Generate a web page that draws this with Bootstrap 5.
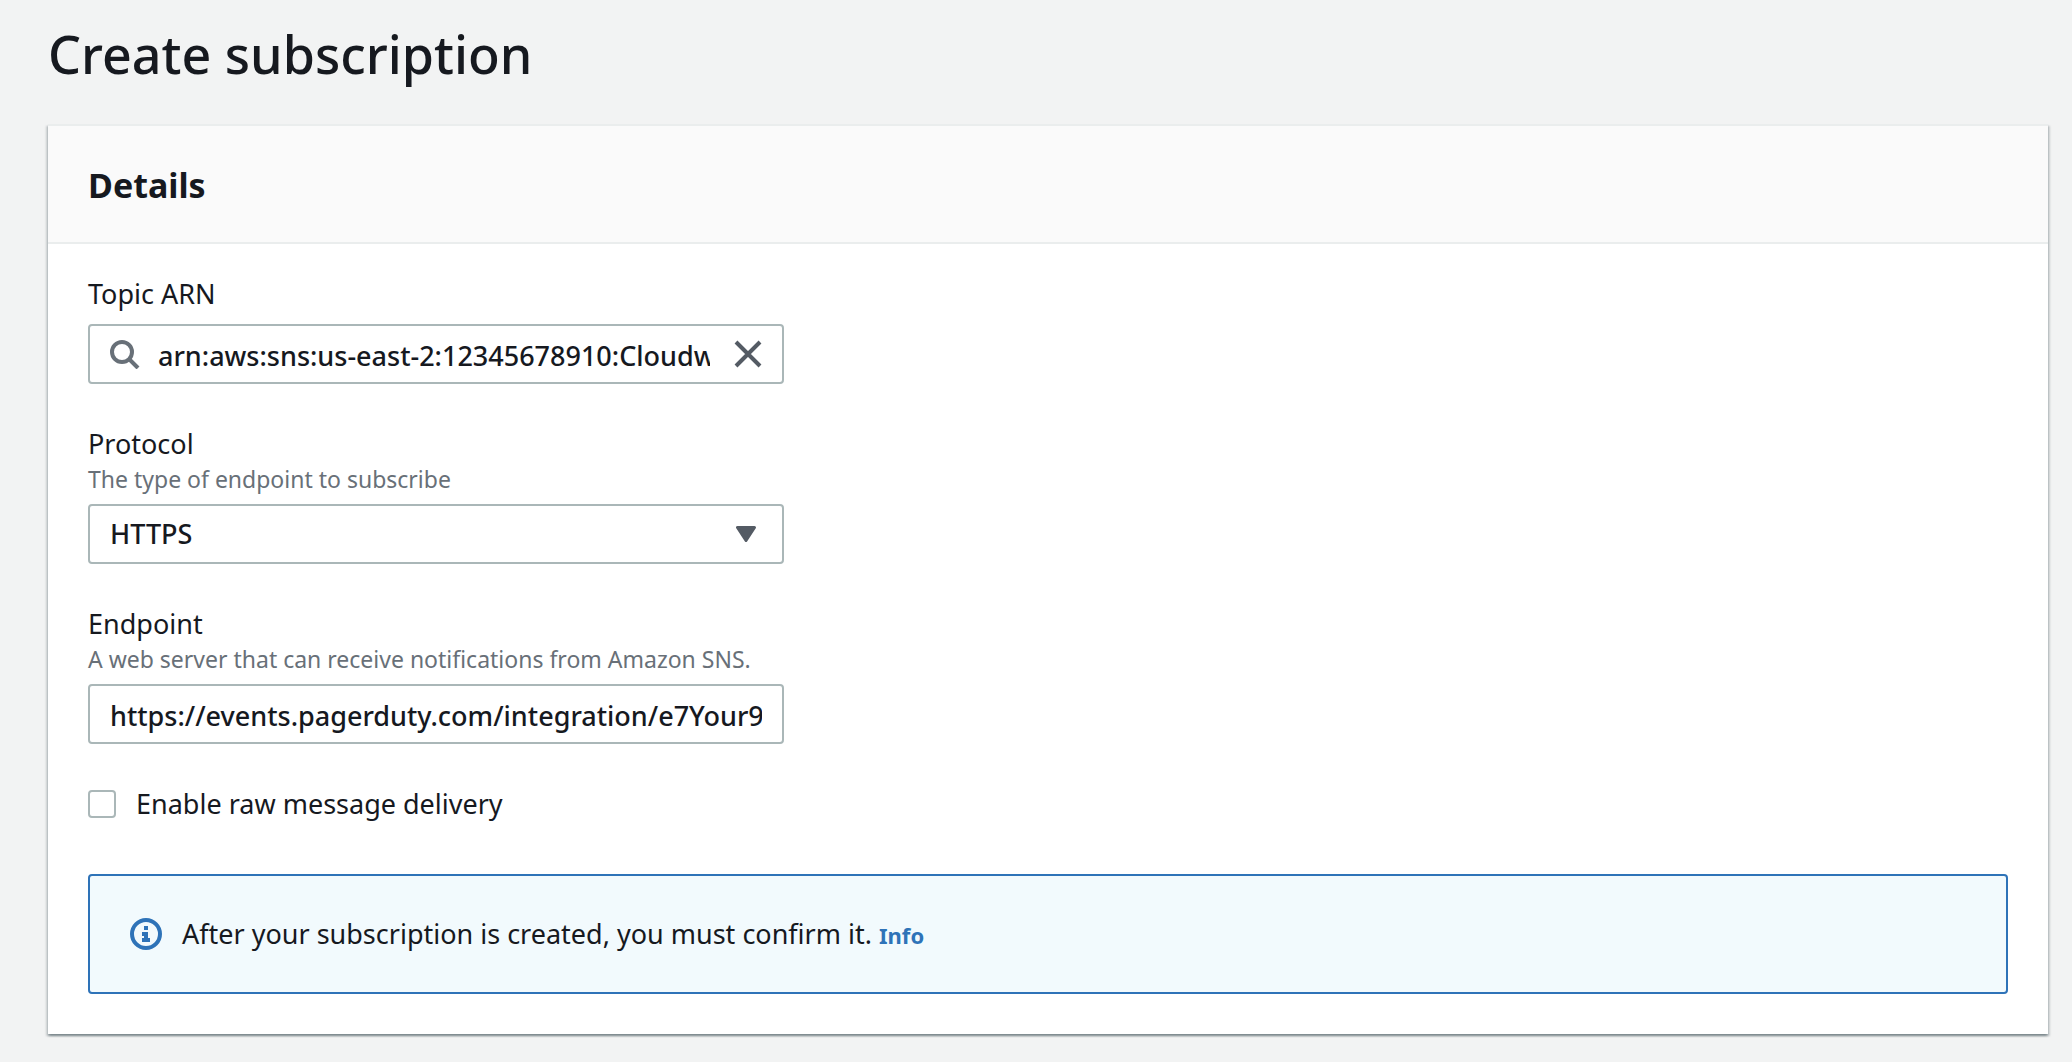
<!DOCTYPE html>
<html lang="en">
<head>
<meta charset="utf-8">
<meta name="viewport" content="width=device-width, initial-scale=1">
<title>Create subscription</title>
<link href="https://cdn.jsdelivr.net/npm/bootstrap@5.3.0/dist/css/bootstrap.min.css" rel="stylesheet">
<style>
  body { background: #f2f3f3; color: #16191f; font-family: "Noto Sans", "Open Sans", sans-serif; font-size: 27px; line-height: 40px; }
  .page { padding: 24px 24px 28px 48px; }
  .page-title { font-size: 52px; line-height: 60px; font-weight: 500; margin-bottom: 40px; }
  .panel { border: 0; border-top: 2px solid #eaeded; border-radius: 0; color: inherit;
    box-shadow: 0 2px 2px 0 rgba(0,28,36,.3), 2px 2px 2px 0 rgba(0,28,36,.15), -2px 2px 2px 0 rgba(0,28,36,.15); }
  .panel > .card-header { background: #fafafa; border-bottom: 2px solid #eaeded; border-radius: 0; padding: 38px 40px 36px; }
  .panel-title { font-size: 34px; line-height: 42px; font-weight: 700; }
  .panel > .card-body { padding: 30px 40px 40px; }
  .fields { max-width: 696px; gap: 40px; }
  .hint { color: #687078; font-size: 23px; line-height: 30px; margin-bottom: 10px; }
  .control { height: 60px; border: 2px solid #aab7b8; border-radius: 4px; background-color: #fff; color: inherit; font-size: 27px; line-height: 40px; font-weight: 500; }
  .control.form-control { padding: 3px 20px 0; }
  .control.form-select { padding: 0 56px 0 20px; background-position: right 26px center; background-size: 20px 16px;
    background-image: url("data:image/svg+xml,%3Csvg xmlns='http://www.w3.org/2000/svg' viewBox='0 0 20 16'%3E%3Cpath d='M1.5 1.5h17L10 14.500z' fill='%23545b64' stroke='%23545b64' stroke-width='3' stroke-linejoin='round'/%3E%3C/svg%3E"); }
  .search { padding: 0 20px; margin-top: 10px; }
  .search input { min-width: 0; height: 56px; border: 0; padding: 3px 0 0; margin: 0 22px 0 18px; background: none; color: inherit; font-weight: 500; outline: 0; }
  .search button { width: 30px; height: 30px; border: 0; padding: 0; background: none; }
  .tick { width: 28px; height: 28px; border: 2px solid #aab7b8; border-radius: 4px; margin: 0; flex: none; }
  .tick.form-check-input[type=checkbox] { border-radius: 4px; }
  .note { border: 2px solid #2e73b8; border-radius: 4px; background: #f2fafd; color: inherit; padding: 38px 40px; margin: 50px 0 0; gap: 20px; }
  .note a { color: #2e73b8; font-size: 22px; line-height: 22px; font-weight: 700; text-decoration: none; }
</style>
</head>
<body>
<main class="page">
  <h1 class="page-title">Create subscription</h1>
  <section class="card panel">
    <div class="card-header"><h2 class="panel-title mb-0">Details</h2></div>
    <form class="card-body">
      <div class="fields d-flex flex-column">
        <div>
          <label class="d-block" for="topic">Topic ARN</label>
          <div class="control search d-flex align-items-center">
            <svg width="30" height="30" viewBox="0 0 30 30" fill="none" stroke="#687078" stroke-width="4" aria-hidden="true"><circle cx="12" cy="13" r="10"/><path d="M19 20l9 9"/></svg>
            <input class="flex-grow-1" id="topic" type="text" value="arn:aws:sns:us-east-2:12345678910:Cloudwatch">
            <button type="button" aria-label="Clear"><svg class="d-block" width="30" height="30" viewBox="0 0 30 30" stroke="#545b64" stroke-width="4" aria-hidden="true"><path d="M4 3l24 24M28 3L4 27"/></svg></button>
          </div>
        </div>
        <div>
          <label class="d-block" for="protocol">Protocol</label>
          <div class="hint" id="protocolHint">The type of endpoint to subscribe</div>
          <select class="form-select control" id="protocol" aria-describedby="protocolHint"><option>HTTPS</option></select>
        </div>
        <div>
          <label class="d-block" for="endpoint">Endpoint</label>
          <div class="hint" id="endpointHint">A web server that can receive notifications from Amazon SNS.</div>
          <input class="form-control control" id="endpoint" type="text" aria-describedby="endpointHint" value="https://events.pagerduty.com/integration/e7Your9s">
        </div>
        <div class="d-flex align-items-center">
          <input class="form-check-input tick" id="raw" type="checkbox">
          <label class="ps-3 ms-1" for="raw">Enable raw message delivery</label>
        </div>
      </div>
      <div class="alert note d-flex align-items-center" role="status">
        <svg class="flex-shrink-0" width="32" height="32" viewBox="0 0 32 32" aria-hidden="true"><circle cx="16" cy="16" r="14" fill="none" stroke="#2e73b8" stroke-width="4"/><path d="M14 8h4v4h-4zM12 14h6v6h2v4h-8v-4h2v-2h-2z" fill="#2e73b8"/></svg>
        <div>After your subscription is created, you must confirm it. <a href="#">Info</a></div>
      </div>
    </form>
  </section>
</main>
<script src="https://cdn.jsdelivr.net/npm/bootstrap@5.3.0/dist/js/bootstrap.bundle.min.js"></script>
</body>
</html>
